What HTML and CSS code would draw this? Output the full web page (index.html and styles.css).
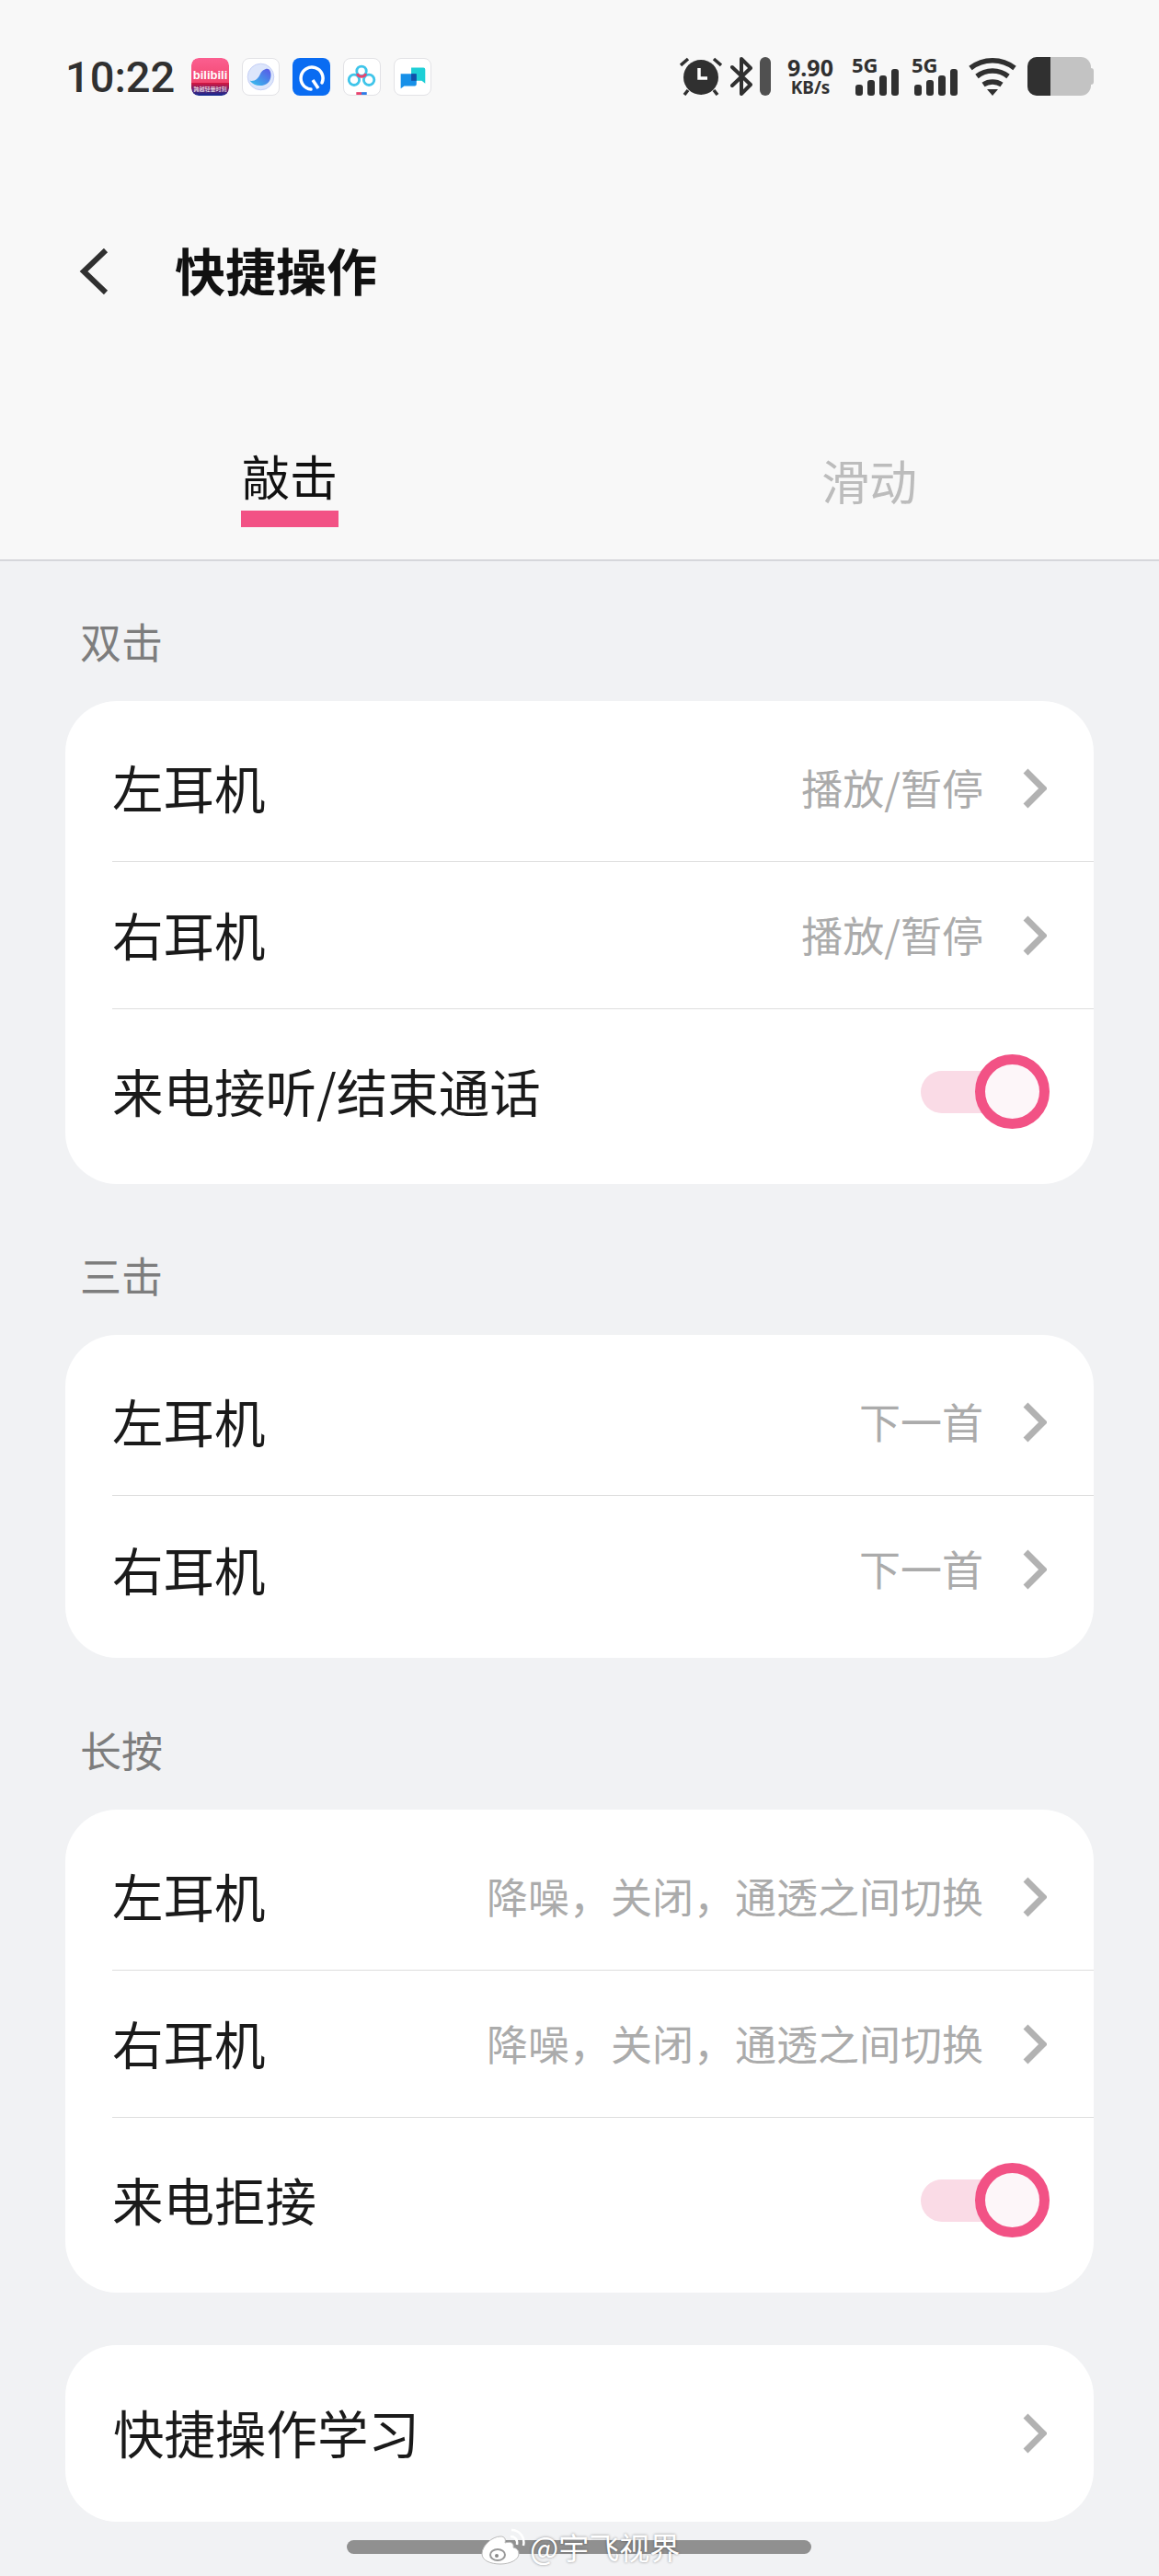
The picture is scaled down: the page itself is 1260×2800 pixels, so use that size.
FILE: index.html
```html
<!DOCTYPE html>
<html lang="zh-CN">
<head>
    <meta charset="UTF-8">
    <meta name="viewport" content="width=device-width, initial-scale=1.0">
    <title>快捷操作</title>
    <link rel="stylesheet" href="styles.css">
</head>
<body>
    <div class="top">
        <div class="status-bar">
            <span class="time">10:22</span>
            <div class="app-icons">
                <svg class="app-icon" viewBox="0 0 41 41">
                    <defs>
                        <linearGradient id="bili" x1="0" y1="0" x2="0" y2="1">
                            <stop offset="0" stop-color="#fb5f90"/>
                            <stop offset="0.65" stop-color="#f2466f"/>
                            <stop offset="0.66" stop-color="#d6173f"/>
                            <stop offset="1" stop-color="#0d2a94"/>
                        </linearGradient>
                    </defs>
                    <rect width="41" height="41" rx="8" fill="url(#bili)"/>
                    <text x="20.5" y="23" class="bili-text">bilibili</text>
                    <text x="20.5" y="36" class="bili-sub">跨越轻量时刻</text>
                </svg>
                <svg class="app-icon framed" viewBox="0 0 41 41">
                    <defs>
                        <linearGradient id="orb" x1="0" y1="1" x2="1" y2="0">
                            <stop offset="0" stop-color="#35c3ee"/>
                            <stop offset="1" stop-color="#5a55e6"/>
                        </linearGradient>
                    </defs>
                    <circle cx="20.5" cy="20.5" r="15" fill="#dde6fb" stroke="#c3cdf5" stroke-width="1"/>
                    <path d="M8 25c6 1 10-3 12-8 2-4 7-7 10-5 3 3 3 11-1 15-5 5-16 5-21-2z" fill="url(#orb)"/>
                </svg>
                <svg class="app-icon" viewBox="0 0 41 41">
                    <rect width="41" height="41" rx="4" fill="#0a6cf2"/>
                    <path d="M20 34A12 12 0 1 1 32 27" fill="none" stroke="#fff" stroke-width="3.500" stroke-linecap="round"/>
                    <path d="M22 24l6 9" fill="none" stroke="#fff" stroke-width="3.500"/>
                </svg>
                <svg class="app-icon framed" viewBox="0 0 41 41">
                    <circle cx="11.500" cy="24" r="6" fill="none" stroke="#3fc5ea" stroke-width="3"/>
                    <circle cx="28.500" cy="24" r="6" fill="none" stroke="#3fc5ea" stroke-width="3"/>
                    <circle cx="20" cy="14" r="5.500" fill="none" stroke="#3fc5ea" stroke-width="3"/>
                    <path d="M15 17a5.500 5.500 0 0 0 10 0" fill="none" stroke="#e8446f" stroke-width="3"/>
                    <rect x="14" y="38" width="6" height="3" fill="#e8446f"/>
                    <rect x="20" y="38" width="6" height="3" fill="#2e7ce6"/>
                </svg>
                <svg class="app-icon framed" viewBox="0 0 41 41">
                    <path d="M19 10h14a2 2 0 0 1 2 2v16l-4-3H19z" fill="#1ecfd6"/>
                    <path d="M7 17h16a2 2 0 0 1 2 2v10a2 2 0 0 1-2 2H11l-4 3z" fill="#1790e8"/>
                    <rect x="19" y="17" width="6" height="8" fill="#124fa8"/>
                </svg>
            </div>
            <div class="sys-icons">
                <svg class="alarm" viewBox="0 0 46 42">
                    <circle cx="23" cy="22" r="19" fill="#303030"/>
                    <path d="M1 9l8-7M45 9l-8-7M9 36l-4 5M37 36l4 5" stroke="#303030" stroke-width="3.500"/>
                    <path d="M21 12v11h9" fill="none" stroke="#fff" stroke-width="3.500"/>
                </svg>
                <svg class="bluetooth" viewBox="0 0 24 42">
                    <path d="M2 11l20 19-10 10V2l10 10L2 31" fill="none" stroke="#303030" stroke-width="4" stroke-linejoin="round" stroke-linecap="round"/>
                </svg>
                <span class="bt-bar"></span>
                <div class="speed"><span>9.90</span><span>KB/s</span></div>
                <div class="signal">
                    <span class="net">5G</span>
                    <div class="bars"><i class="b1"></i><i class="b2"></i><i class="b3"></i><i class="b4"></i></div>
                </div>
                <div class="signal">
                    <span class="net">5G</span>
                    <div class="bars"><i class="b1"></i><i class="b2"></i><i class="b3"></i><i class="b4"></i></div>
                </div>
                <svg class="wifi" viewBox="0 0 52 42">
                    <path d="M2 12c14-11 34-11 48 0M9 21c10-8 24-8 34 0M16 30c6-4 14-4 20 0" fill="none" stroke="#303030" stroke-width="5.500"/>
                    <path d="M20 35h12l-6 7z" fill="#303030"/>
                </svg>
                <div class="battery"><div class="battery-level"></div></div>
            </div>
        </div>

        <div class="nav">
            <svg class="back" viewBox="0 0 32 50">
                <path d="M29 2L5 25l24 23" fill="none" stroke="#303030" stroke-width="6"/>
            </svg>
            <h1>快捷操作</h1>
        </div>

        <div class="tabs">
            <div class="tab active"><span>敲击</span></div>
            <div class="tab"><span>滑动</span></div>
        </div>
    </div>

    <div class="content">
        <div class="section">
            <div class="section-title">双击</div>
            <div class="card">
                <div class="row"><span class="label">左耳机</span><span class="value">播放/暂停</span><svg class="chevron" viewBox="0 0 26 44"><path d="M3 3l19 19L3 41"/></svg></div>
                <div class="row"><span class="label">右耳机</span><span class="value">播放/暂停</span><svg class="chevron" viewBox="0 0 26 44"><path d="M3 3l19 19L3 41"/></svg></div>
                <div class="row toggle-row"><span class="label">来电接听/结束通话</span><div class="toggle"><div class="knob"></div></div></div>
            </div>
        </div>

        <div class="section">
            <div class="section-title">三击</div>
            <div class="card">
                <div class="row"><span class="label">左耳机</span><span class="value">下一首</span><svg class="chevron" viewBox="0 0 26 44"><path d="M3 3l19 19L3 41"/></svg></div>
                <div class="row last"><span class="label">右耳机</span><span class="value">下一首</span><svg class="chevron" viewBox="0 0 26 44"><path d="M3 3l19 19L3 41"/></svg></div>
            </div>
        </div>

        <div class="section">
            <div class="section-title">长按</div>
            <div class="card">
                <div class="row"><span class="label">左耳机</span><span class="value">降噪，关闭，通透之间切换</span><svg class="chevron" viewBox="0 0 26 44"><path d="M3 3l19 19L3 41"/></svg></div>
                <div class="row"><span class="label">右耳机</span><span class="value">降噪，关闭，通透之间切换</span><svg class="chevron" viewBox="0 0 26 44"><path d="M3 3l19 19L3 41"/></svg></div>
                <div class="row toggle-row"><span class="label">来电拒接</span><div class="toggle"><div class="knob"></div></div></div>
            </div>
        </div>

        <div class="card learn-card">
            <div class="row last"><span class="label">快捷操作学习</span><svg class="chevron" viewBox="0 0 26 44"><path d="M3 3l19 19L3 41"/></svg></div>
        </div>
    </div>

    <div class="home-bar"></div>
    <div class="watermark">
        <svg class="weibo" viewBox="0 0 50 40">
            <path d="M2 28c0-9 11-19 20-19 5 0 6 3 5 7 6-2 10 0 9 5 4 1 6 3 6 7 0 6-9 11-20 11S2 35 2 28z" fill="#fff" stroke="#bbb" stroke-width="1"/>
            <ellipse cx="19" cy="29" rx="8" ry="6" fill="none" stroke="#999" stroke-width="2"/>
            <circle cx="18" cy="30" r="2" fill="#888"/>
            <path d="M33 9c5 0 8 4 7 9M34 2c9 0 15 8 13 17" fill="none" stroke="#fff" stroke-width="2.500"/>
        </svg>
        <span>@宇飞视界</span>
    </div>
</body>
</html>
```

FILE: styles.css
```css
* {
    box-sizing: border-box;
}
body {
    position: relative;
    width: 1260px;
    height: 2800px;
    margin: 0;
    overflow: hidden;
    background-color: #f1f2f4;
    color: #1a1a1a;
    font-family: "Noto Sans CJK SC", "Noto Sans", sans-serif;
}
.top {
    background-color: #f8f8f8;
    border-bottom: 2px solid #d6d7db;
}
.status-bar {
    display: flex;
    align-items: center;
    height: 166px;
    padding: 0 71px;
}
.time {
    width: 137px;
    font-family: Roboto, sans-serif;
    font-size: 47px;
    font-weight: 500;
    color: #303030;
}
.app-icons {
    display: flex;
    gap: 14px;
}
.app-icon {
    width: 41px;
    height: 41px;
    background: #fff;
    border-radius: 8px;
}
.app-icon.framed {
    border: 1px solid #e2e2e6;
}
.bili-text {
    font-family: "Liberation Sans", sans-serif;
    font-size: 13px;
    font-weight: 700;
    fill: #fff;
    text-anchor: middle;
}
.bili-sub {
    font-size: 6px;
    fill: #fff;
    text-anchor: middle;
}
.sys-icons {
    display: flex;
    align-items: center;
    margin-left: auto;
    height: 44px;
}
.alarm {
    width: 46px;
    height: 42px;
}
.bluetooth {
    width: 24px;
    height: 42px;
    margin-left: 9px;
}
.bt-bar {
    width: 12px;
    height: 42px;
    margin-left: 8px;
    background: #505050;
    border-radius: 6px;
}
.speed {
    display: flex;
    flex-direction: column;
    align-items: center;
    width: 52px;
    margin-left: 17px;
    font-family: "Noto Sans", sans-serif;
    font-weight: 700;
    color: #303030;
}
.speed span:first-child {
    font-size: 25px;
    line-height: 24px;
}
.speed span:last-child {
    font-size: 19px;
    line-height: 20px;
}
.signal {
    position: relative;
    width: 51px;
    height: 42px;
    margin-left: 19px;
}
.signal + .signal {
    width: 50px;
    margin-left: 14px;
}
.net {
    position: absolute;
    left: 0;
    top: -4px;
    font-family: "Noto Sans", sans-serif;
    font-size: 22px;
    font-weight: 700;
    line-height: 24px;
    color: #303030;
}
.bars {
    position: absolute;
    right: 0;
    bottom: 0;
    display: flex;
    align-items: flex-end;
    gap: 5px;
}
.bars i {
    width: 8px;
    background: #303030;
    border-radius: 3px;
}
.b1 { height: 12px; }
.b2 { height: 17px; }
.b3 { height: 22px; }
.b4 { height: 29px; }
.wifi {
    width: 52px;
    height: 42px;
    margin-left: 12px;
}
.battery {
    position: relative;
    width: 69px;
    height: 42px;
    margin-left: 12px;
    margin-right: 3px;
    background: #c3c3c3;
    border-radius: 10px 11px 11px 10px;
}
.battery::after {
    content: "";
    position: absolute;
    right: -3px;
    top: 12px;
    width: 3px;
    height: 18px;
    background: #c3c3c3;
    border-radius: 0 3px 3px 0;
}
.battery-level {
    width: 25px;
    height: 100%;
    background: #303030;
    border-radius: 10px 0 0 10px;
}
.nav {
    display: flex;
    align-items: center;
    height: 258px;
    padding: 89px 0 89px 86px;
}
.back {
    width: 32px;
    height: 50px;
}
h1 {
    margin: 0 0 6px 72px;
    font-size: 55px;
    font-weight: 700;
    line-height: 72px;
    color: #111;
}
.tabs {
    display: grid;
    grid-template-columns: 1fr 1fr;
    height: 184px;
    padding-top: 57px;
}
.tab {
    display: flex;
    justify-content: center;
    align-items: flex-start;
    padding-top: 5px;
    font-size: 52px;
    line-height: 72px;
    color: #bcbcbc;
}
.tab.active {
    padding-top: 0;
    color: #111;
}
.tab.active span {
    width: 106px;
    height: 92px;
    text-align: center;
    border-bottom: 18px solid #f25285;
}
.content {
    padding: 60px 71px 0 71px;
}
.section {
    margin-bottom: 72px;
}
.section:nth-child(2) {
    margin-bottom: 73px;
}
.section:nth-child(3) {
    margin-bottom: 57px;
}
.section-title {
    padding-left: 16px;
    margin-bottom: 38px;
    font-size: 45px;
    line-height: 54px;
    color: #7d7d7d;
}
.card {
    padding: 15px 0 10px;
    background: #fff;
    border-radius: 56px;
}
.section:nth-child(2) .card {
    padding-bottom: 16px;
}
.row {
    display: flex;
    align-items: center;
    height: 160px;
    margin-left: 51px;
    padding-right: 51px;
    border-bottom: 1px solid #dedede;
}
.row.last {
    border-bottom: none;
}
.toggle-row {
    height: 180px;
    border-bottom: none;
}
.label {
    padding-bottom: 3px;
    font-size: 55.5px;
    color: #1a1a1a;
}
.toggle-row .label {
    padding-bottom: 5px;
}
.value {
    margin-left: auto;
    padding-bottom: 3px;
    font-size: 45px;
    color: #ababab;
}
.chevron {
    width: 26px;
    height: 44px;
    margin-left: 43px;
    flex-shrink: 0;
}
.chevron path {
    fill: none;
    stroke: #b2b2b2;
    stroke-width: 7;
}
.learn-card {
    padding: 16px 0;
}
.learn-card .row {
    margin-left: 52px;
    justify-content: space-between;
}
.learn-card .label {
    padding-bottom: 5px;
}
.toggle {
    position: relative;
    width: 140px;
    height: 46px;
    margin-left: auto;
    margin-right: -3px;
    background: #fadbe6;
    border-radius: 23px;
}
.knob {
    position: absolute;
    right: 0;
    top: -18px;
    width: 81px;
    height: 81px;
    background: #fdf6f9;
    border: 11px solid #f25285;
    border-radius: 50%;
}
.home-bar {
    position: absolute;
    left: 377px;
    top: 2761px;
    width: 505px;
    height: 15px;
    background: #909090;
    border-radius: 8px;
}
.watermark {
    position: absolute;
    left: 522px;
    top: 2744px;
    display: flex;
    align-items: center;
    gap: 4px;
    font-size: 33px;
    color: #fff;
    text-shadow: 0 0 3px rgba(0, 0, 0, 0.45);
}
.weibo {
    width: 50px;
    height: 40px;
}
```
